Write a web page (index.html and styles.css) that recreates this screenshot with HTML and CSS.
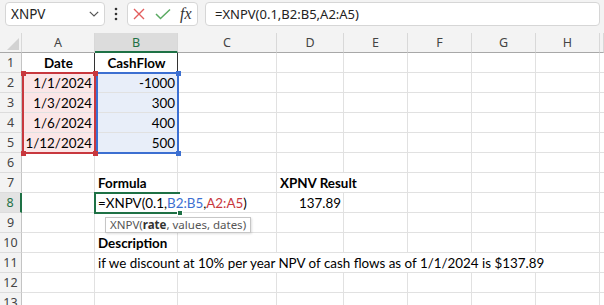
FILE: index.html
```html
<!DOCTYPE html>
<html lang="en">
<head>
  <meta charset="UTF-8">
  <title>XNPV example</title>
  <link rel="stylesheet" href="styles.css">
</head>
<body>
  <div class="toolbar">
    <div class="box namebox">
      <span>XNPV</span>
      <svg class="chev" width="10" height="6" viewBox="0 0 10 6"><polyline points="0.8,0.8 5,5 9.2,0.8" fill="none" stroke="#555" stroke-width="1.2"/></svg>
    </div>
    <div class="dots">
      <svg width="4" height="14" viewBox="0 0 4 14"><circle cx="2" cy="2" r="1.3" fill="#333"/><circle cx="2" cy="7" r="1.3" fill="#333"/><circle cx="2" cy="12" r="1.3" fill="#333"/></svg>
    </div>
    <div class="box buttons">
      <svg class="icon-x" width="12" height="12" viewBox="0 0 12 12"><path d="M1 1 L11 11 M11 1 L1 11" stroke="#e35d5d" stroke-width="1.4" fill="none"/></svg>
      <svg class="icon-ok" width="16" height="12" viewBox="0 0 16 12"><polyline points="1,6 5.5,10.5 15,1.5" fill="none" stroke="#5aaa62" stroke-width="1.5"/></svg>
      <span class="fx">fx</span>
    </div>
    <div class="box formula">=XNPV(0.1,B2:B5,A2:A5)</div>
  </div>

  <div class="sheet">
    <div class="row head">
      <div class="corner"><span class="tri"></span></div>
      <div class="col">A</div><div class="col sel">B</div><div class="col">C</div><div class="col">D</div>
      <div class="col">E</div><div class="col">F</div><div class="col">G</div><div class="col">H</div><div class="col"></div>
    </div>
    <div class="row">
      <div class="num">1</div>
      <div class="cell bold center edge">Date</div><div class="cell bold center edge">CashFlow</div>
      <div class="cell"></div><div class="cell"></div><div class="cell"></div><div class="cell"></div><div class="cell"></div><div class="cell"></div><div class="cell"></div>
    </div>
    <div class="row">
      <div class="num">2</div>
      <div class="cell right pink">1/1/2024</div><div class="cell right blue">-1000</div>
      <div class="cell"></div><div class="cell"></div><div class="cell"></div><div class="cell"></div><div class="cell"></div><div class="cell"></div><div class="cell"></div>
    </div>
    <div class="row">
      <div class="num">3</div>
      <div class="cell right pink">1/3/2024</div><div class="cell right blue">300</div>
      <div class="cell"></div><div class="cell"></div><div class="cell"></div><div class="cell"></div><div class="cell"></div><div class="cell"></div><div class="cell"></div>
    </div>
    <div class="row">
      <div class="num">4</div>
      <div class="cell right pink">1/6/2024</div><div class="cell right blue">400</div>
      <div class="cell"></div><div class="cell"></div><div class="cell"></div><div class="cell"></div><div class="cell"></div><div class="cell"></div><div class="cell"></div>
    </div>
    <div class="row">
      <div class="num">5</div>
      <div class="cell right pink">1/12/2024</div><div class="cell right blue">500</div>
      <div class="cell"></div><div class="cell"></div><div class="cell"></div><div class="cell"></div><div class="cell"></div><div class="cell"></div><div class="cell"></div>
    </div>
    <div class="row">
      <div class="num">6</div>
      <div class="cell"></div><div class="cell"></div><div class="cell"></div><div class="cell"></div><div class="cell"></div><div class="cell"></div><div class="cell"></div><div class="cell"></div><div class="cell"></div>
    </div>
    <div class="row">
      <div class="num">7</div>
      <div class="cell"></div><div class="cell bold">Formula</div><div class="cell"></div>
      <div class="cell bold span2">XPNV Result</div>
      <div class="cell"></div><div class="cell"></div><div class="cell"></div><div class="cell"></div>
    </div>
    <div class="row">
      <div class="num sel">8</div>
      <div class="cell"></div>
      <div class="cell span2">=XNPV(0.1,<span class="ref-b">B2:B5</span>,<span class="ref-a">A2:A5</span>)</div>
      <div class="cell right">137.89</div>
      <div class="cell"></div><div class="cell"></div><div class="cell"></div><div class="cell"></div><div class="cell"></div>
    </div>
    <div class="row">
      <div class="num">9</div>
      <div class="cell"></div><div class="cell"></div><div class="cell"></div><div class="cell"></div><div class="cell"></div><div class="cell"></div><div class="cell"></div><div class="cell"></div><div class="cell"></div>
    </div>
    <div class="row">
      <div class="num">10</div>
      <div class="cell"></div><div class="cell bold">Description</div>
      <div class="cell"></div><div class="cell"></div><div class="cell"></div><div class="cell"></div><div class="cell"></div><div class="cell"></div><div class="cell"></div>
    </div>
    <div class="row">
      <div class="num">11</div>
      <div class="cell"></div>
      <div class="cell span7">if we discount at 10% per year NPV of cash flows as of 1/1/2024 is $137.89</div>
      <div class="cell"></div>
    </div>
    <div class="row">
      <div class="num">12</div>
      <div class="cell"></div><div class="cell"></div><div class="cell"></div><div class="cell"></div><div class="cell"></div><div class="cell"></div><div class="cell"></div><div class="cell"></div><div class="cell"></div>
    </div>
    <div class="row">
      <div class="num">13</div>
      <div class="cell"></div><div class="cell"></div><div class="cell"></div><div class="cell"></div><div class="cell"></div><div class="cell"></div><div class="cell"></div><div class="cell"></div><div class="cell"></div>
    </div>

    <!-- range highlights and edit box sit over the grid -->
    <div class="range range-a"></div>
    <div class="range range-b"></div>
    <span class="handle h-red" style="left:21px;top:38px"></span>
    <span class="handle h-red" style="left:93px;top:38px"></span>
    <span class="handle h-red" style="left:21px;top:118px"></span>
    <span class="handle h-red" style="left:93px;top:118px"></span>
    <span class="handle h-blue" style="left:176px;top:38px"></span>
    <span class="handle h-blue" style="left:176px;top:118px"></span>
    <div class="active"></div>
    <span class="fill-handle"></span>
    <div class="tip">XNPV(<b>rate</b>, values, dates)</div>
  </div>
</body>
</html>
```

FILE: styles.css
```css
body { margin: 0; width: 604px; height: 305px; overflow: hidden; background: #fff; font-family: 'Noto Sans', Arial, sans-serif; }

.toolbar { display: flex; height: 33px; box-sizing: border-box; padding: 2px 4px 7px 5px; background: #f3f3f3; }
.box { background: #fff; border: 1px solid #d6d6d6; border-radius: 4px; box-sizing: border-box; display: flex; align-items: center; }
.namebox { width: 100px; justify-content: space-between; padding: 0 5px 0 5px; font-size: 13.5px; color: #222; }
.dots { width: 22px; display: flex; align-items: center; justify-content: center; }
.buttons { width: 71px; padding-left: 5px; }
.icon-x { margin-right: 10px; }
.icon-ok { margin-right: 9px; }
.fx { font-family: 'Liberation Serif', serif; font-style: italic; font-size: 16px; color: #333; }
.formula { flex: 1; margin-left: 7px; padding-left: 9px; font-size: 13px; color: #222; }

.sheet { position: relative; }
.row { display: grid; grid-template-columns: 22px 73px 83px 99px 67px 64px 64px 64px 64px 1fr; height: 20px; }
.row > div { box-sizing: border-box; display: flex; align-items: center; white-space: nowrap; }

.head > div { background: #f3f3f3; border-right: 1px solid #d8d8d8; border-bottom: 1px solid #a8a8a8; justify-content: center; font-size: 12.5px; color: #444; }
.corner { justify-content: flex-end !important; align-items: flex-end !important; padding: 0 2px 2px 0; }
.tri { width: 0; height: 0; border-left: 12px solid transparent; border-bottom: 12px solid #d2d2d2; }
.head .sel { background: #dcdcdc; color: #1e7145; border-bottom: 2px solid #1e7145; }

.num { background: #f3f3f3; border-right: 1px solid #c4c4c4; border-bottom: 1px solid #dcdcdc; justify-content: center; font-size: 12.5px; color: #444; }
.num.sel { background: #e3e3e3; color: #1e7145; border-right: 2px solid #1e7145; }

.cell { border-right: 1px solid #e1e1e1; border-bottom: 1px solid #e1e1e1; padding: 1px 2px 0 3px; font-family: Lato, 'Liberation Sans', sans-serif; font-size: 13.4px; color: #000; }
.bold { font-weight: bold; }
.center { justify-content: center; }
.right { justify-content: flex-end; }
.edge { border-right-color: #333 !important; }
.pink { background: #fbe6e7; }
.blue { background: #e8eef9; }
.span2 { grid-column: span 2; }
.span7 { grid-column: span 7; }
.ref-b { color: #3c6fd1; }
.ref-a { color: #c8383e; }

.range { position: absolute; box-sizing: border-box; border: 2px solid; }
.range-a { left: 22px; top: 39px; width: 74px; height: 82px; border-color: #c8383e; }
.range-b { left: 96px; top: 39px; width: 83px; height: 82px; border-color: #3c6fd1; }
.handle { position: absolute; width: 5px; height: 5px; }
.h-red { background: #c8383e; }
.h-blue { background: #3c6fd1; }

.active { position: absolute; left: 94px; top: 159px; width: 86px; height: 22px; box-sizing: border-box; border: 2px solid #1e7145; border-right: none; }
.fill-handle { position: absolute; left: 177px; top: 177px; width: 4px; height: 4px; background: #1e7145; border: 1px solid #fff; }

.tip { position: absolute; left: 105px; top: 184px; height: 16px; box-sizing: border-box; padding: 0 4px; background: #fff; border: 1px solid #c6c6c6; box-shadow: 1px 1px 2px rgba(0,0,0,0.12); font-size: 11.5px; line-height: 14px; color: #555; white-space: nowrap; }
.tip b { color: #333; }
```
